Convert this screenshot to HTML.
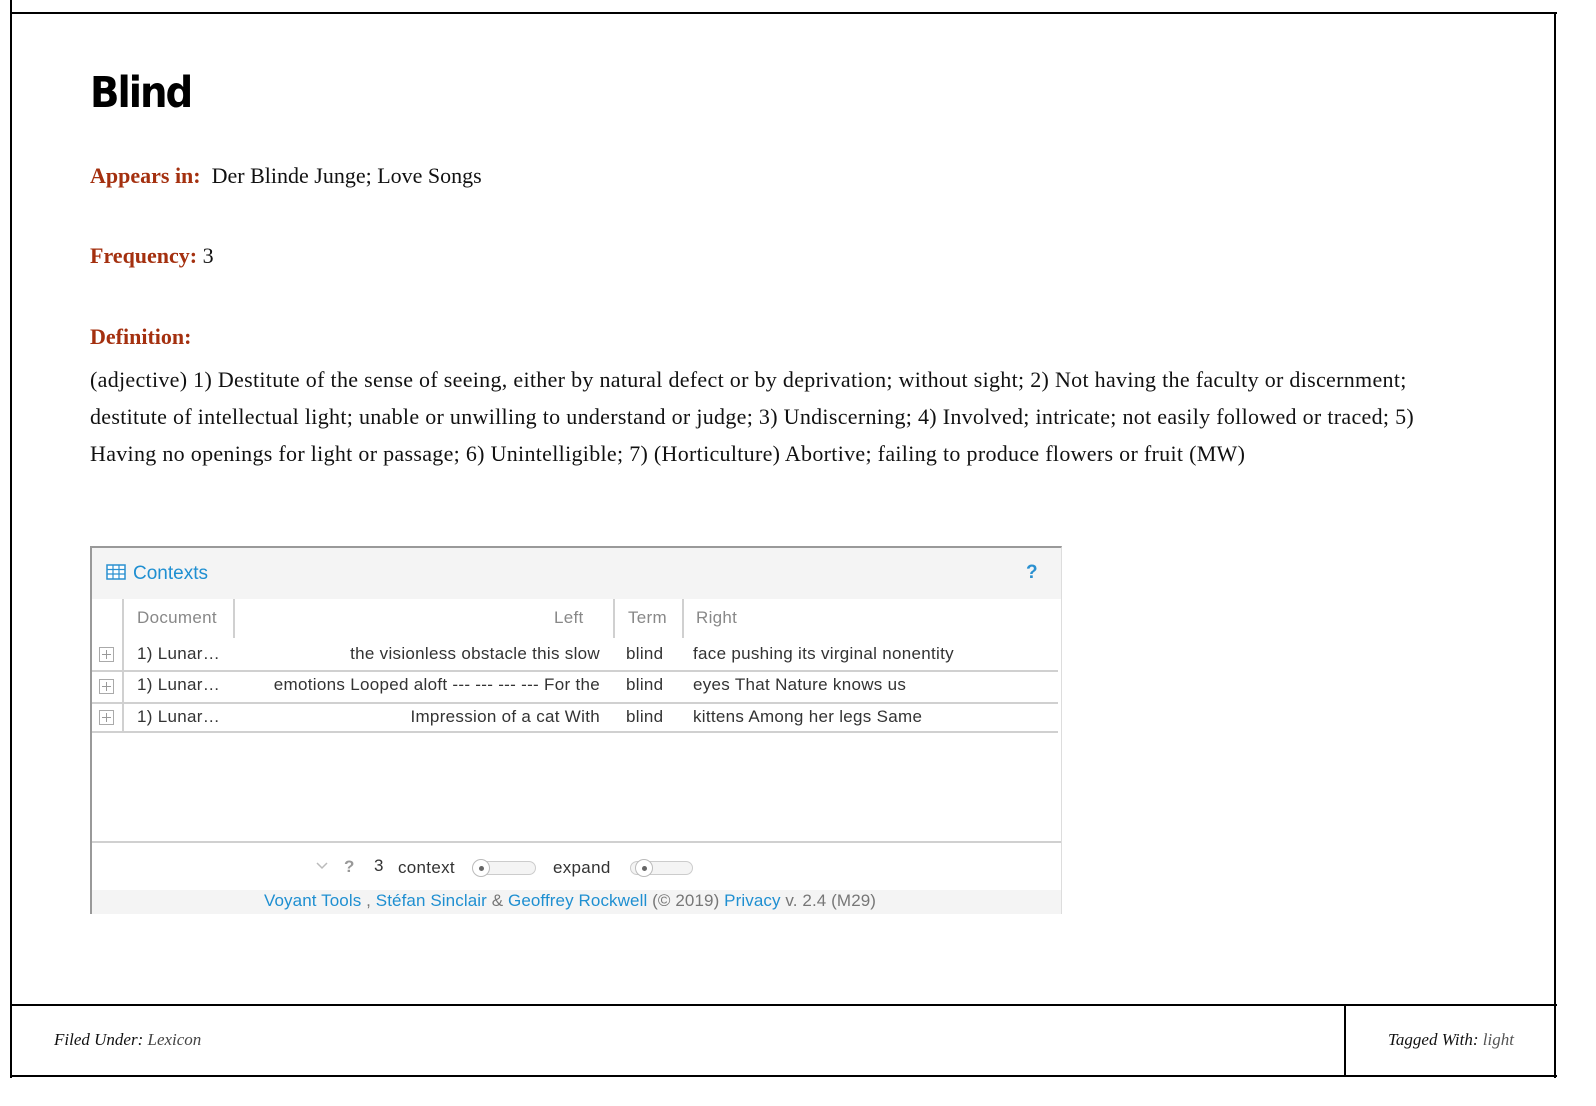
<!DOCTYPE html>
<html><head><meta charset="utf-8"><style>
*{margin:0;padding:0;box-sizing:border-box}
body{width:1596px;height:1106px;background:#fff;position:relative;overflow:hidden;font-family:"Liberation Serif",serif;color:#111}
.a{position:absolute;white-space:nowrap}
.ln{position:absolute;background:#000}
.lab{color:#a4300f;font-weight:bold}
.s{font-family:"Liberation Sans",sans-serif;font-size:17px;color:#333;letter-spacing:0.3px}
.blue{color:#1f8fd1}
.g{color:#888}
.hb{position:absolute;background:#d0d0d0}
.pl{position:absolute;left:99px;width:15px;height:15px;border:1px solid #aaa;background:#fff}
.pl:before{content:"";position:absolute;left:6px;top:2px;width:1px;height:9px;background:#999}
.pl:after{content:"";position:absolute;left:2px;top:6px;width:9px;height:1px;background:#999}
.sl{position:absolute;height:14px;border:1px solid #ccc;border-radius:7px;background:#f4f4f4}
.kn{position:absolute;top:-3px;left:-2px;width:18px;height:18px;border:1px solid #bbb;border-radius:50%;background:#fff}
.kn:after{content:"";position:absolute;left:6px;top:6px;width:5px;height:5px;border-radius:50%;background:#666}
.d{position:absolute;left:90px;font-size:22px;letter-spacing:0.3px;white-space:nowrap}
</style></head><body>
<div class="ln" style="left:10px;top:12px;width:1547px;height:2px"></div>
<div class="ln" style="left:10px;top:0;width:2px;height:1078px"></div>
<div class="ln" style="left:1554px;top:12px;width:2px;height:1066px"></div>
<div class="ln" style="left:10px;top:1004px;width:1547px;height:2px"></div>
<div class="ln" style="left:10px;top:1075px;width:1547px;height:2px"></div>
<div class="ln" style="left:1344px;top:1004px;width:2px;height:73px"></div>

<div class="a" style="left:90px;top:68px;font-family:'DejaVu Sans Condensed','DejaVu Sans',sans-serif;font-size:43px;font-weight:bold;letter-spacing:-2px;color:#000">Blind</div>
<div class="a" style="left:90px;top:163px;font-size:22px"><span class="lab">Appears in:</span>&nbsp; Der Blinde Junge; Love Songs</div>
<div class="a" style="left:90px;top:243px;font-size:22px"><span class="lab">Frequency:</span> 3</div>
<div class="a" style="left:90px;top:324px;font-size:22px"><span class="lab">Definition:</span></div>
<div class="d" style="top:367px">(adjective) 1) Destitute of the sense of seeing, either by natural defect or by deprivation; without sight; 2) Not having the faculty or discernment;</div>
<div class="d" style="top:404px">destitute of intellectual light; unable or unwilling to understand or judge; 3) Undiscerning; 4) Involved; intricate; not easily followed or traced; 5)</div>
<div class="d" style="top:441px">Having no openings for light or passage; 6) Unintelligible; 7) (Horticulture) Abortive; failing to produce flowers or fruit (MW)</div>

<!-- widget -->
<div class="a" style="left:90px;top:546px;width:972px;height:368px;border:2px solid #999;border-bottom:none;border-right:1px solid #ddd"></div>
<div class="a" style="left:92px;top:548px;width:969px;height:51px;background:#f4f4f4"></div>
<svg class="a" style="left:106px;top:564px" width="20" height="16" viewBox="0 0 20 16"><rect x="1" y="1" width="18" height="14" fill="#fff" stroke="#2a90d0" stroke-width="1.5"/><path d="M1 5.5H19M1 10H19M7 1V15M13 1V15" stroke="#2a90d0" stroke-width="1.2"/></svg>
<div class="a s blue" style="left:133px;top:563px;font-size:19px;color:#1f8fd1;letter-spacing:0">Contexts</div>
<div class="a" style="left:1026px;top:562px;font-family:'Liberation Sans',sans-serif;font-weight:bold;font-size:19px;color:#2a90d0">?</div>

<div class="hb" style="left:122px;top:599px;width:2px;height:134px"></div>
<div class="hb" style="left:233px;top:599px;width:2px;height:39px"></div>
<div class="hb" style="left:613px;top:599px;width:2px;height:39px"></div>
<div class="hb" style="left:682px;top:599px;width:2px;height:39px"></div>
<div class="a s g" style="left:137px;top:608px">Document</div>
<div class="a s g" style="left:554px;top:608px">Left</div>
<div class="a s g" style="left:628px;top:608px">Term</div>
<div class="a s g" style="left:696px;top:608px">Right</div>

<div class="pl" style="top:647px"></div><div class="pl" style="top:679px"></div><div class="pl" style="top:710px"></div>
<div class="hb" style="left:92px;top:670px;width:966px;height:2px"></div>
<div class="hb" style="left:92px;top:702px;width:966px;height:2px"></div>
<div class="hb" style="left:92px;top:731px;width:966px;height:2px"></div>

<div class="a s" style="left:137px;top:644px">1) Lunar…</div>
<div class="a s" style="right:996px;top:644px">the visionless obstacle this slow</div>
<div class="a s" style="left:626px;top:644px">blind</div>
<div class="a s" style="left:693px;top:644px">face pushing its virginal nonentity</div>
<div class="a s" style="left:137px;top:675px">1) Lunar…</div>
<div class="a s" style="right:996px;top:675px">emotions Looped aloft --- --- --- --- For the</div>
<div class="a s" style="left:626px;top:675px">blind</div>
<div class="a s" style="left:693px;top:675px">eyes That Nature knows us</div>
<div class="a s" style="left:137px;top:707px">1) Lunar…</div>
<div class="a s" style="right:996px;top:707px">Impression of a cat With</div>
<div class="a s" style="left:626px;top:707px">blind</div>
<div class="a s" style="left:693px;top:707px">kittens Among her legs Same</div>

<div class="hb" style="left:92px;top:841px;width:969px;height:2px"></div>
<svg class="a" style="left:316px;top:862px" width="12" height="8" viewBox="0 0 12 8"><path d="M1 1L6 6L11 1" fill="none" stroke="#bbb" stroke-width="1.5"/></svg>
<div class="a s" style="left:344px;top:857px;color:#999;font-weight:bold">?</div>
<div class="a s" style="left:374px;top:856px">3</div>
<div class="a s" style="left:398px;top:858px">context</div>
<div class="sl" style="left:473px;top:861px;width:63px"><div class="kn"></div></div>
<div class="a s" style="left:553px;top:858px">expand</div>
<div class="sl" style="left:630px;top:861px;width:63px"><div class="kn" style="left:4px"></div></div>
<div class="a" style="left:92px;top:890px;width:969px;height:24px;background:#f4f4f4"></div>
<div class="a s" style="left:264px;top:891px;color:#777;letter-spacing:0.1px"><span class="blue">Voyant Tools</span> , <span class="blue">Stéfan Sinclair</span> &amp; <span class="blue">Geoffrey Rockwell</span> (© 2019) <span class="blue">Privacy</span> v. 2.4 (M29)</div>

<div class="a" style="left:54px;top:1030px;font-style:italic;font-size:17px">Filed Under: <span style="color:#444">Lexicon</span></div>
<div class="a" style="left:1388px;top:1030px;font-style:italic;font-size:17px">Tagged With: <span style="color:#555">light</span></div>
</body></html>
